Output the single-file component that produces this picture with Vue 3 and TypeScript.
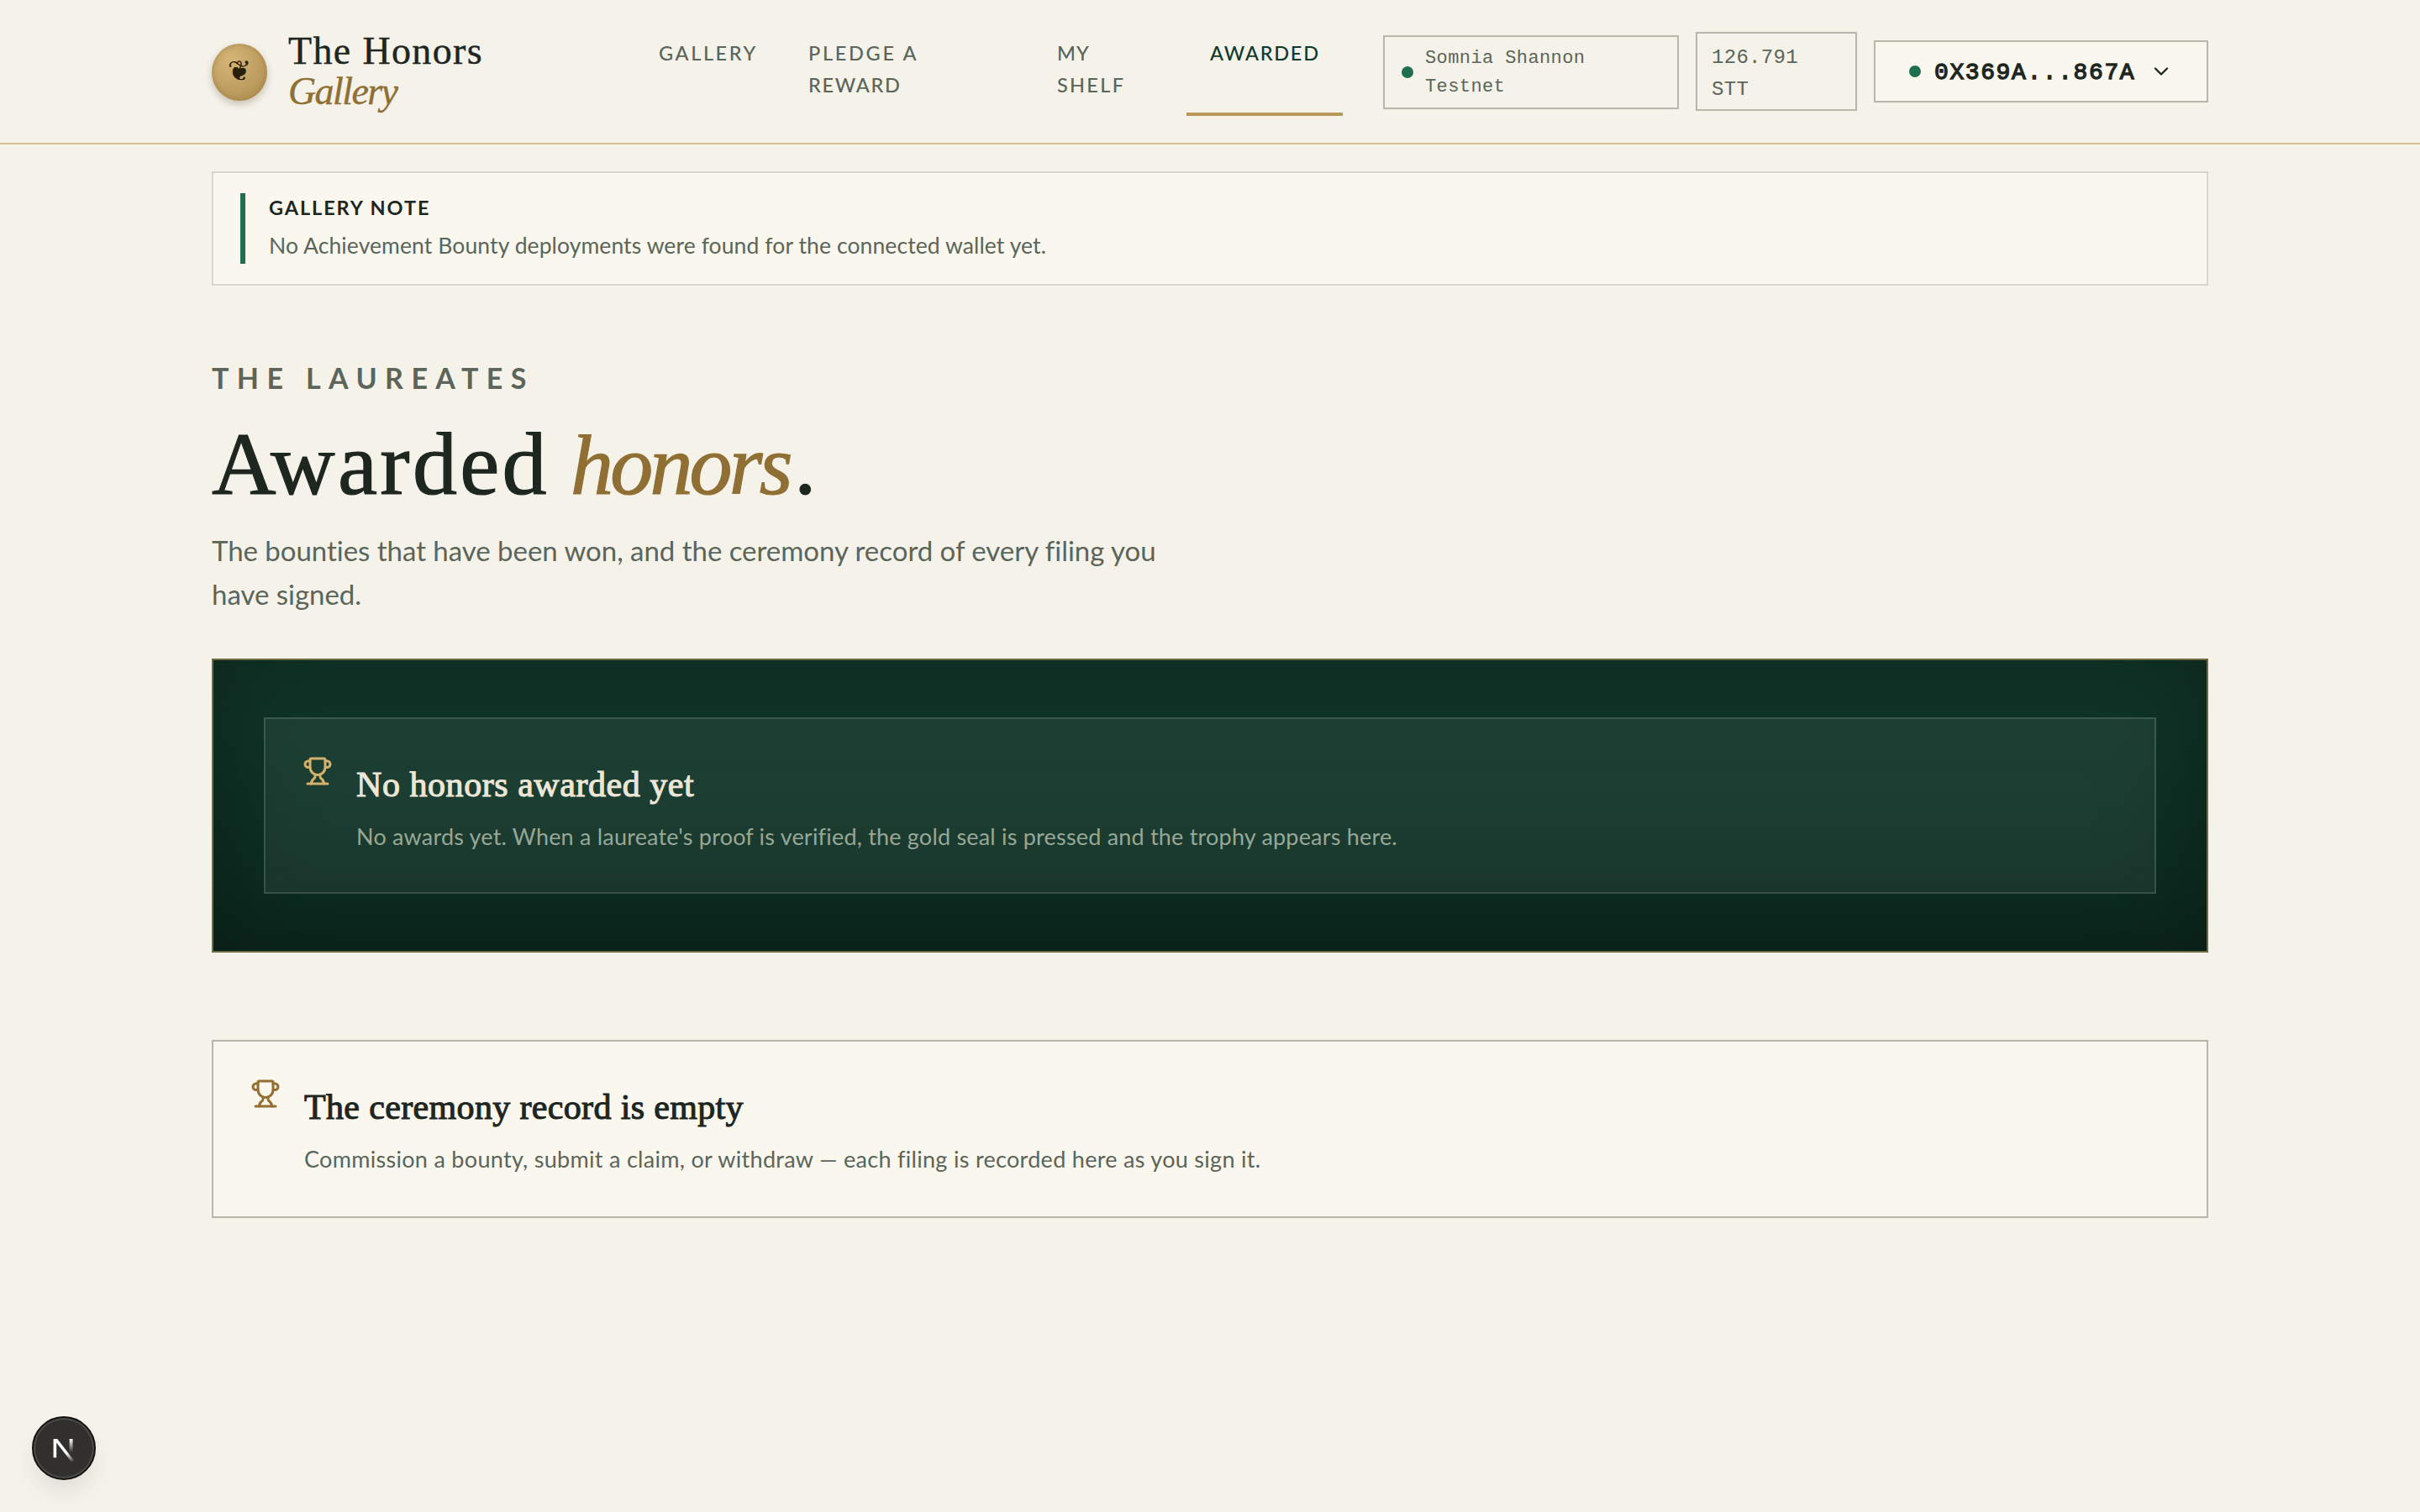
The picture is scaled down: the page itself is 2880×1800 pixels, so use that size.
<script setup lang="ts">
interface NavLine { text: string; tracking: number }
interface NavItem { id: string; lines: NavLine[]; width: number; active?: boolean }

const navItems: NavItem[] = [
  { id: 'gallery', lines: [{ text: 'GALLERY', tracking: 2.6 }], width: 174 },
  { id: 'pledge', lines: [{ text: 'PLEDGE A', tracking: 2.7 }, { text: 'REWARD', tracking: 1.7 }], width: 292 },
  { id: 'shelf', lines: [{ text: 'MY', tracking: 1.2 }, { text: 'SHELF', tracking: 2.3 }], width: 178 },
  { id: 'awarded', lines: [{ text: 'AWARDED', tracking: 1.75 }], width: 186, active: true },
]

const trophyPaths: string[] = [
  'M10 14.66v1.626a2 2 0 0 1-.976 1.696A5 5 0 0 0 7 21.978',
  'M14 14.66v1.626a2 2 0 0 0 .976 1.696A5 5 0 0 1 17 21.978',
  'M18 9h1.5a1 1 0 0 0 0-5H18',
  'M4 22h16',
  'M6 9a6 6 0 0 0 12 0V3a1 1 0 0 0-1-1H7a1 1 0 0 0-1 1z',
  'M6 9H4.5a1 1 0 0 1 0-5H6',
]
</script>

<template>
  <div class="page">
    <header class="topbar">
      <div class="topbar-inner">
        <div class="brand">
          <span class="seal"><span class="seal-glyph">❦</span></span>
          <span class="brand-name">
            <span class="brand-first">The Honors</span>
            <em class="brand-second">Gallery</em>
          </span>
        </div>
        <nav class="nav">
          <a
            v-for="item in navItems"
            :key="item.id"
            class="nav-item"
            :class="{ active: item.active }"
            :style="{ width: item.width + 'px' }"
          >
            <span
              v-for="line in item.lines"
              :key="line.text"
              class="nav-line"
              :style="{ letterSpacing: line.tracking + 'px' }"
            >{{ line.text }}</span>
          </a>
        </nav>
        <div class="wallet">
          <div class="chip network">
            <span class="dot"></span>
            <span class="network-name">Somnia Shannon<br />Testnet</span>
          </div>
          <div class="chip balance">126.791<br />STT</div>
          <button class="account" type="button">
            <span class="dot"></span>
            <span class="address">0X369A...867A</span>
            <svg class="chevron" viewBox="0 0 24 24" fill="none" stroke="currentColor" stroke-width="2" stroke-linecap="round" stroke-linejoin="round">
              <path d="m6 9 6 6 6-6" />
            </svg>
          </button>
        </div>
      </div>
    </header>

    <main class="content">
      <section class="note">
        <div class="note-body">
          <strong class="note-title">GALLERY NOTE</strong>
          <p class="note-text">No Achievement Bounty deployments were found for the connected wallet yet.</p>
        </div>
      </section>

      <p class="eyebrow">THE LAUREATES</p>
      <h1 class="headline"><span class="headline-word">Awarded</span><em>honors</em><span>.</span></h1>
      <p class="lede">
        The bounties that have been won, and the ceremony record of every filing you<br />have signed.
      </p>

      <section class="cabinet">
        <div class="empty dark">
          <svg class="trophy" viewBox="0 0 24 24" fill="none" stroke="currentColor" stroke-width="2" stroke-linecap="round" stroke-linejoin="round">
            <path v-for="d in trophyPaths" :key="d" :d="d" />
          </svg>
          <div class="empty-copy">
            <h2 class="title-honors">No honors awarded yet</h2>
            <p class="text-honors">No awards yet. When a laureate's proof is verified, the gold seal is pressed and the trophy appears here.</p>
          </div>
        </div>
      </section>

      <section class="empty light">
        <svg class="trophy" viewBox="0 0 24 24" fill="none" stroke="currentColor" stroke-width="2" stroke-linecap="round" stroke-linejoin="round">
          <path v-for="d in trophyPaths" :key="d" :d="d" />
        </svg>
        <div class="empty-copy">
          <h2 class="title-record">The ceremony record is empty</h2>
          <p class="text-record">Commission a bounty, submit a claim, or withdraw — each filing is recorded here as you sign it.</p>
        </div>
      </section>
    </main>

    <div class="dev-badge">
      <svg viewBox="0 0 76 76" fill="none">
        <defs>
          <linearGradient id="diag" x1="44" y1="42" x2="51" y2="54" gradientUnits="userSpaceOnUse">
            <stop stop-color="#fff" />
            <stop offset="1" stop-color="#fff" stop-opacity="0" />
          </linearGradient>
          <linearGradient id="stem" x1="47" y1="27" x2="47" y2="43" gradientUnits="userSpaceOnUse">
            <stop stop-color="#fff" />
            <stop offset="1" stop-color="#fff" stop-opacity="0" />
          </linearGradient>
        </defs>
        <path d="M25.6 27h4.6L50 52.4 47.2 54.4 29.2 31.4V49.2H25.6z" fill="url(#diag)" />
        <rect x="44.6" y="27" width="4" height="17" fill="url(#stem)" />
      </svg>
    </div>
  </div>
</template>

<style>
body {
  margin: 0;
  background: #f5f2ea;
}
</style>

<style scoped>
.page {
  --sans: Lato, 'Open Sans', sans-serif;
  --serif: 'Liberation Serif', serif;
  --mono: 'Liberation Mono', monospace;
  --ink: #1d261f;
  --muted: #5b6559;
  --gold: #8f6f33;
  --emerald: #1f6e4f;
  position: relative;
  box-sizing: border-box;
  width: 2880px;
  height: 1800px;
  overflow: hidden;
  background: #f5f2ea;
  color: var(--ink);
  font-family: var(--sans);
}
.page * {
  box-sizing: border-box;
}
p, h1, h2 {
  margin: 0;
  font-weight: 400;
  white-space: nowrap;
}

/* Top bar */
.topbar {
  height: 172px;
  border-bottom: 2px solid #d3bf96;
  background: #f5f2ea;
}
.topbar-inner {
  display: flex;
  align-items: center;
  width: 2376px;
  height: 170px;
  margin: 0 auto;
}
.brand {
  display: flex;
  flex: none;
  align-items: center;
  gap: 24px;
  width: 504px;
}
.seal {
  display: flex;
  align-items: center;
  justify-content: center;
  width: 66px;
  height: 68px;
  margin-top: 2px;
  border-radius: 50%;
  background: radial-gradient(circle at 35% 30%, #d6b678, #b8975a 70%, #b08d50);
  box-shadow: 0 4px 8px rgba(60, 45, 15, 0.25), inset 0 0 6px rgba(120, 85, 30, 0.35);
}
.seal-glyph {
  padding-bottom: 5px;
  color: #2a1f08;
  font: 34px/1 'DejaVu Sans', sans-serif;
}
.brand-name {
  display: flex;
  flex-direction: column;
  padding-left: 1px;
  font: 46px/48px var(--serif);
  -webkit-text-stroke: 0.4px currentColor;
}
.brand-first {
  letter-spacing: 1.35px;
}
.brand-second {
  color: var(--gold);
  letter-spacing: -1.6px;
}
.nav {
  display: flex;
  flex: none;
  gap: 4px;
  width: 842px;
  margin-right: 48px;
}
.nav-item {
  display: flex;
  flex: none;
  flex-direction: column;
  height: 106px;
  padding: 12px 28px 0;
  border-bottom: 4px solid transparent;
  color: var(--muted);
  font-size: 23.5px;
  font-weight: 500;
  line-height: 38px;
}
.nav-item.active {
  border-bottom-color: #b89858;
  color: #0f3a2c;
}
.wallet {
  display: flex;
  flex: none;
  align-items: center;
  gap: 20px;
}
.chip {
  border: 2px solid #b6b6ab;
  color: var(--muted);
  font-family: var(--mono);
}
.network {
  display: flex;
  align-items: center;
  gap: 14px;
  width: 352px;
  height: 88px;
  margin-top: 2px;
  padding: 0 20px;
  font-size: 22px;
  letter-spacing: 0.4px;
  line-height: 34px;
}
.network-name {
  padding-top: 2px;
}
.balance {
  width: 192px;
  height: 94px;
  padding: 10px 17px 0;
  font-size: 24px;
  letter-spacing: 0.3px;
  line-height: 38px;
}
.dot {
  flex: none;
  width: 14px;
  height: 14px;
  border-radius: 50%;
  background: var(--emerald);
}
.account {
  display: flex;
  align-items: center;
  gap: 16px;
  width: 398px;
  height: 74px;
  padding: 0 40px;
  border: 2px solid #b6b6ab;
  background: #faf7ef;
  color: var(--ink);
}
.address {
  flex: 1;
  padding-top: 3px;
  font: 400 28px/34px var(--mono);
  letter-spacing: 1.6px;
  text-align: left;
  white-space: nowrap;
  -webkit-text-stroke: 1.3px currentColor;
}
.chevron {
  flex: none;
  width: 28px;
  height: 28px;
}

/* Page content */
.content {
  width: 2376px;
  margin: 32px auto 0;
}
.note {
  height: 136px;
  padding: 24px 32px;
  border: 2px solid #d8d7cd;
  background: #faf7ef;
}
.note-body {
  display: flex;
  flex-direction: column;
  gap: 6px;
  height: 84px;
  padding-left: 28px;
  border-left: 6px solid var(--emerald);
}
.note-title {
  font-size: 23.5px;
  letter-spacing: 1.9px;
  line-height: 34px;
}
.note-text {
  color: var(--muted);
  font-size: 26.5px;
  letter-spacing: 0.1px;
  line-height: 45px;
}
.eyebrow {
  margin-top: 83px;
  color: var(--muted);
  font-size: 34px;
  font-weight: 700;
  letter-spacing: 9.4px;
  line-height: 54px;
}
.headline {
  display: flex;
  height: 112px;
  margin-top: 20px;
  font: 106px/112px var(--serif);
  -webkit-text-stroke: 1.2px currentColor;
}
.headline-word {
  width: 427px;
  letter-spacing: 3.3px;
}
.headline em {
  width: 266px;
  color: var(--gold);
  font-size: 102px;
  line-height: 114px;
  letter-spacing: -3.8px;
}
.lede {
  margin-top: 20px;
  color: var(--muted);
  font-size: 33px;
  letter-spacing: -0.03px;
  line-height: 52px;
}

/* Trophy cabinet */
.cabinet {
  height: 350px;
  margin-top: 51px;
  padding: 68px 60px;
  border: 2px solid #6b6a41;
  background: linear-gradient(180deg, #11382b 0%, #0e3125 50%, #0b291f 100%);
  box-shadow: inset 0 0 120px rgba(8, 16, 12, 0.45);
}
.empty {
  display: flex;
  align-items: flex-start;
  gap: 28px;
  padding: 44px;
  border: 2px solid;
}
.dark {
  height: 210px;
  border-color: rgba(255, 255, 255, 0.19);
  background: rgba(255, 255, 255, 0.06);
  background-clip: padding-box;
}
.light {
  height: 212px;
  margin-top: 104px;
  border-color: #b6b6ab;
  background: #faf7ef;
}
.trophy {
  flex: none;
  width: 36px;
  height: 36px;
}
.dark .trophy {
  color: #d4b06a;
}
.light .trophy {
  color: #946f30;
}
.empty-copy h2 {
  margin-top: 6px;
  font: 42px/56px var(--serif);
  -webkit-text-stroke: 1.1px currentColor;
}
.empty-copy p {
  margin-top: 12px;
  font-size: 27px;
  line-height: 44px;
}
.dark h2 {
  color: #ece6d8;
}
.dark p {
  color: #97a797;
}
.light p {
  color: var(--muted);
}
.title-honors {
  letter-spacing: 0.55px;
}
.title-record {
  letter-spacing: 0.35px;
}
.text-honors {
  letter-spacing: 0.2px;
}
.text-record {
  letter-spacing: 0.3px;
}

/* Framework badge floating over the page corner */
.dev-badge {
  position: absolute;
  left: 38px;
  bottom: 38px;
  width: 76px;
  height: 76px;
  border: 2px solid #141414;
  border-radius: 50%;
  background: #31302e;
  box-shadow: inset 0 0 0 2px #4b4b49, 0 16px 32px -8px rgba(0, 0, 0, 0.12);
}
.dev-badge svg {
  display: block;
  width: 76px;
  height: 76px;
  margin: -2px;
}
</style>
